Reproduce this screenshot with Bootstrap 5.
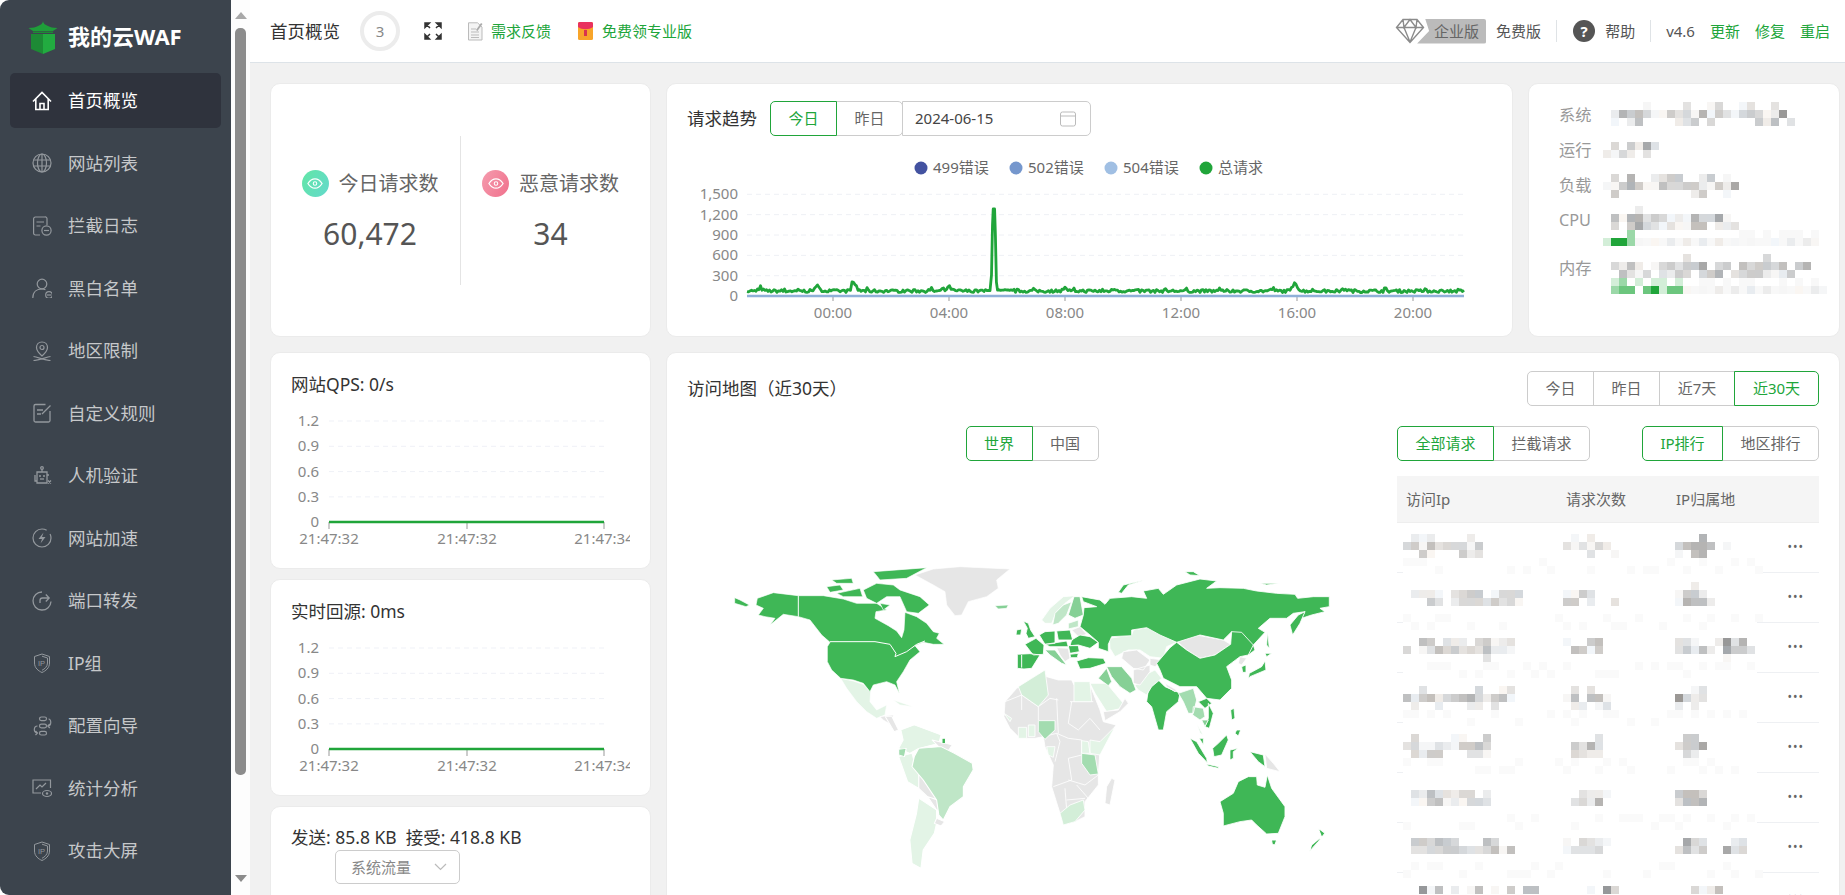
<!DOCTYPE html>
<html lang="zh-CN">
<head>
<meta charset="UTF-8">
<meta name="viewport" content="width=device-width, initial-scale=1.0">
<title>我的云WAF</title>
<link rel="stylesheet" href="https://cdn.jsdelivr.net/npm/bootstrap@5.3.0/dist/css/bootstrap.min.css">
<style>
html, body { height: 100%; overflow: hidden; }
body { font-family: "Noto Sans", "Noto Sans CJK SC", sans-serif; font-size: 17.5px; color: #333; background: #fff; }
.shell { height: 895px; overflow: hidden; }

/* sidebar */
.side { width: 231px; flex: none; background: #3c444d; border-radius: 9px 0 0 9px; }
.brand { height: 73px; padding-left: 28px; gap: 10px; color: #fff; font-size: 22px; font-weight: 700; }
.side .nav { padding: 0 10px; }
.side .nav-link { height: 55px; margin-bottom: 7.5px; padding: 0 0 0 22px; gap: 16px; color: #c6c8ca; font-size: 17.5px; border-radius: 5px; }
.side .nav-link.active { background: #2f333d; color: #fff; }
.side .nav-link svg { width: 20px; height: 20px; flex: none; color: #93989d; }
.side .nav-link.active svg { color: #fff; }
.side-scroll { width: 19px; flex: none; background: #fdfdfd; }
.side-scroll .thumb { width: 11px; height: 747px; margin: 9px auto 0; background: #8c8c8c; border-radius: 5px; }
.tri-up, .tri-down { width: 0; height: 0; margin: 0 auto; border-left: 6.5px solid transparent; border-right: 6.5px solid transparent; }
.tri-up { margin-top: 12px; border-bottom: 7px solid #a8a8a8; }
.tri-down { margin-top: 100px; border-top: 7px solid #8c8c8c; }

/* top bar */
.main { min-width: 0; background: #f1f1f1; }
.topbar { height: 63px; flex: none; background: #fff; border-bottom: 1px solid #dde3e8; padding: 0 15px 0 20px; }
.count-ring { width: 40px; height: 40px; margin-left: 20px; border: 4px solid #ececec; border-radius: 50%; color: #888; font-size: 15px; }
.top-link { color: #20a53a; font-size: 15px; text-decoration: none; }
.top-text { color: #555; font-size: 15px; }
.top-sep { width: 1px; height: 22px; background: #dfe3e6; }
.ent-tag { width: 69px; height: 25px; margin-left: -8px; padding-left: 17px; background: #bbb; color: #666; font-size: 15px; clip-path: polygon(8px 0, 100% 0, 100% 100%, 0 100%, 12px 50%); border-radius: 0 2px 2px 0; }
.help-dot { width: 22px; height: 22px; border-radius: 50%; background: #555; color: #fff; font-size: 15px; font-weight: 700; }

/* content */
.content { padding: 20px 5px 0 20px; gap: 15px; }
.top-grid { display: grid; grid-template-columns: 381px 847px 312px; gap: 15px; height: 254px; flex: none; }
.low-grid { display: grid; grid-template-columns: 381px 1174px; gap: 15px; }
.left-stack { gap: 10px; }
.dash-card { border: 1px solid #ebebeb; border-radius: 10px; background: #fff; }
.stat-col { width: 189px; padding-left: 9px; }
.stat-col2 { padding-right: 10px; }
.stat-split { width: 1px; height: 149px; background: #e4e4e4; flex: none; }
.stat-head { gap: 10px; }
.stat-dot { width: 27px; height: 27px; border-radius: 50%; flex: none; }
.stat-dot.ok { background: linear-gradient(120deg, #62e6a6, #63d9cc); }
.stat-dot.bad { background: linear-gradient(120deg, #f59cae, #f0708c); }
.stat-label { color: #666; font-size: 20px; }
.stat-num { color: #555; font-size: 30px; line-height: 1.2; margin-top: 17px; }

.seg { height: 35px; }
.seg .btn { height: 35px; padding: 0; font-size: 15px; color: #666; background: #fff; border: 1px solid #ccc; border-radius: 5px; line-height: 33px; }
.seg .btn.on { color: #20a53a; border-color: #20a53a; z-index: 2; }
.w67 { width: 67px; } .w76 { width: 76px; } .w85 { width: 85px; } .w97 { width: 97px; } .w81 { width: 81px; }
.date-box { width: 189px; margin-left: -1px; height: 35px; border: 1px solid #ccc; border-radius: 0 5px 5px 0; color: #444; font-size: 15px; padding: 0 14px 0 12px; }
.trend-head { height: 57px; padding: 12px 0 0 20px; gap: 13px; }
.draw { display: block; }
.draw text { font-size: 15px; fill: #888; }

.sys-label { position: absolute; left: 30px; color: #999; font-size: 16.25px; line-height: 24px; }
.lb1 { top: 19px; } .lb2 { top: 54px; } .lb3 { top: 89px; } .lb4 { top: 124px; } .lb5 { top: 172px; }
.pixels { position: absolute; left: 0; top: 0; pointer-events: none; }

.mini-card { padding: 19px 20px 0; height: 217px; }
.mini-title { line-height: 24px; color: #333; }
.traffic { height: 260px; padding: 18px 20px 0; }
.traffic-sel { width: 125px; height: 34px; margin: 1px 0 0 44px; padding: 0 12px 0 15px; border: 1px solid #ccc; border-radius: 5px; color: #888; font-size: 15px; }

.map-card { height: 560px; padding: 18px 20px 0; }
.map-title { line-height: 35px; color: #333; }
.map-body { gap: 20px; margin-top: 20px; }
.map-left { width: 690px; flex: none; }
.map-svg { display: block; margin: 79px 0 0 13px; }
.map-right { width: 422px; flex: none; }
.tbl-wrap { margin-top: 15px; }
.ip-table { width: 422px; margin: 0; font-size: 15px; table-layout: fixed; }
.ip-table th { height: 46px; padding: 0 0 0 9px; background: #f5f5f5; color: #666; font-weight: 400; border-bottom: 1px solid #eee; vertical-align: middle; }
.ip-table td { height: 50px; padding: 0; border-bottom: 1px solid #eef0f3; vertical-align: middle; }
.dots { display: block; padding-right: 15px; text-align: right; color: #666; font-size: 12px; letter-spacing: 1px; line-height: 1; }
</style>
</head>
<body>

<svg width="0" height="0" class="position-absolute" aria-hidden="true">
  <symbol id="i-home" viewBox="0 0 20 20"><path d="M1 10.5 10 1.5l9 9M3.8 8v10.5h12.4V8M8 18.5v-6h4v6" fill="none" stroke="currentColor" stroke-width="1.6"/></symbol>
  <symbol id="i-globe" viewBox="0 0 20 20"><g fill="none" stroke="currentColor" stroke-width="1.2"><circle cx="10" cy="10" r="9"/><ellipse cx="10" cy="10" rx="4.5" ry="9"/><path d="M10 1v18M1.5 7h17M1.5 13h17"/></g></symbol>
  <symbol id="i-log" viewBox="0 0 20 20"><g fill="none" stroke="currentColor" stroke-width="1.2"><path d="M8 19H3.5A1.8 1.8 0 0 1 1.6 17V3A1.8 1.8 0 0 1 3.5 1h9.2A1.8 1.8 0 0 1 15 3v6"/><path d="M4.5 6h7.5M4.5 10h4"/><circle cx="14.5" cy="14.5" r="4.6"/><path d="M12 14.5h5"/></g></symbol>
  <symbol id="i-user" viewBox="0 0 20 20"><g fill="none" stroke="currentColor" stroke-width="1.2"><circle cx="10" cy="6" r="4.8"/><path d="M.8 20c0-6 4-9 9.2-9 1.500 0 2.500.3 3.500.7"/><circle cx="17" cy="17" r="3.300"/><path d="M15 17h4"/></g></symbol>
  <symbol id="i-pin" viewBox="0 0 20 20"><g fill="none" stroke="currentColor" stroke-width="1.2"><path d="M10 1C6.500 1 4.500 3.500 4.500 6.500 4.500 10 10 15 10 15s5.500-5 5.500-8.500C15.500 3.500 13.500 1 10 1Z"/><circle cx="10" cy="6.500" r="2"/><path d="M1.500 15.500c5 1 12 4 17 4M18.500 15.500c-5 1-12 4-17 4"/></g></symbol>
  <symbol id="i-rule" viewBox="0 0 20 20"><g fill="none" stroke="currentColor" stroke-width="1.300"><path d="M13.500 1.500h-10A1.500 1.500 0 0 0 2 3v14.500A1.500 1.500 0 0 0 3.500 19h13a1.500 1.500 0 0 0 1.500-1.500V8"/><path d="M5 7h6M5 11h4M10 11l8.500-8.500"/></g></symbol>
  <symbol id="i-bot" viewBox="0 0 20 20"><g fill="none" stroke="currentColor" stroke-width="1.300"><circle cx="10" cy="2" r="1.300"/><path d="M10 3.300V6M5 6h10v11H5zM3 9v6M3 9v6h2M15 9h2"/><path d="M8 13h4"/></g><circle cx="8" cy="10" r="1" fill="currentColor"/><circle cx="12" cy="10" r="1" fill="currentColor"/><path d="m16 14.500 3 3m0-3-3 3" stroke="currentColor" stroke-width="1.300"/></symbol>
  <symbol id="i-bolt" viewBox="0 0 20 20"><circle cx="10" cy="10" r="9" fill="none" stroke="currentColor" stroke-width="1.200" stroke-dasharray="47 5"/><path d="M11.500 4.500 6.500 11H10l-1.500 4.500 5-6.500H10Z" fill="currentColor"/></symbol>
  <symbol id="i-fwd" viewBox="0 0 20 20"><g fill="none" stroke="currentColor" stroke-width="1.300"><path d="M10 1a9 9 0 1 0 9 9.500"/><path d="M8 12V9.500A2.500 2.500 0 0 1 10.500 7H17M13.800 3.500 17.200 7l-3.400 3.500"/></g></symbol>
  <symbol id="i-ip" viewBox="0 0 20 20"><g fill="none" stroke="currentColor" stroke-width="1"><path d="M10 1l7.500 2.500V10c0 5-4 8-7.500 9.500C6.500 18 2.500 15 2.500 10V3.500Z"/><path d="M10 3.200l5.500 1.800V10c0 3.700-3 6-5.500 7.300"/></g><text x="6" y="12.500" font-size="7.500" fill="currentColor" font-family="Liberation Sans, sans-serif">IP</text></symbol>
  <symbol id="i-flow" viewBox="0 0 20 20"><g fill="none" stroke="currentColor" stroke-width="1.200"><rect x="7.500" y="1" width="7" height="3.600" rx="1.800"/><rect x="7.500" y="8.200" width="7" height="3.600" rx="1.800"/><rect x="7.500" y="15.400" width="7" height="3.600" rx="1.800"/><path d="M16.500 3c3 0 3.200 6.800-.5 7M17.800 8l-2 2 2 2M5.500 10C1.500 10 1 17 5.500 17M3.500 15l2 2-2 2"/></g></symbol>
  <symbol id="i-stat" viewBox="0 0 20 20"><g fill="none" stroke="currentColor" stroke-width="1.200"><path d="M9 15H1V2h17.500v8"/><path d="m4 11 4-4 2 2 4-4"/><ellipse cx="15" cy="15.500" rx="4.500" ry="3"/></g><circle cx="15" cy="15.500" r="1.200" fill="currentColor"/></symbol>
  <symbol id="i-eye" viewBox="0 0 20 14"><path d="M1 7c2.500-4 5.500-6 9-6s6.500 2 9 6c-2.500 4-5.500 6-9 6S3.500 11 1 7Z" fill="none" stroke="#fff" stroke-width="1.600"/><circle cx="10" cy="7" r="2.200" fill="none" stroke="#fff" stroke-width="1.400"/></symbol>
</svg>

<div class="shell d-flex">
  <aside class="side">
    <div class="brand d-flex align-items-center">
      <svg width="30" height="34" viewBox="0 0 30 34">
        <path d="M15 1c0 2-2 4-5 5h10c-3-1-5-3-5-5Z" fill="#1f9e3a"/>
        <path d="M.5 8C5 8 8 7 10 6h10c2 1 5 2 9.500 2L25 11H5Z" fill="#1f9e3a"/>
        <path d="M5 11.500h20V13H5Z" fill="#1d8a35"/>
        <path d="M3 14h12v20L3 29Z" fill="#1d8a35"/>
        <path d="M15 14h12v15l-12 5Z" fill="#22ab40"/>
      </svg>
      <span>我的云WAF</span>
    </div>
    <nav class="nav flex-column">
      <a class="nav-link active d-flex align-items-center" href="#"><svg><use href="#i-home"/></svg>首页概览</a>
      <a class="nav-link d-flex align-items-center" href="#"><svg><use href="#i-globe"/></svg>网站列表</a>
      <a class="nav-link d-flex align-items-center" href="#"><svg><use href="#i-log"/></svg>拦截日志</a>
      <a class="nav-link d-flex align-items-center" href="#"><svg><use href="#i-user"/></svg>黑白名单</a>
      <a class="nav-link d-flex align-items-center" href="#"><svg><use href="#i-pin"/></svg>地区限制</a>
      <a class="nav-link d-flex align-items-center" href="#"><svg><use href="#i-rule"/></svg>自定义规则</a>
      <a class="nav-link d-flex align-items-center" href="#"><svg><use href="#i-bot"/></svg>人机验证</a>
      <a class="nav-link d-flex align-items-center" href="#"><svg><use href="#i-bolt"/></svg>网站加速</a>
      <a class="nav-link d-flex align-items-center" href="#"><svg><use href="#i-fwd"/></svg>端口转发</a>
      <a class="nav-link d-flex align-items-center" href="#"><svg><use href="#i-ip"/></svg>IP组</a>
      <a class="nav-link d-flex align-items-center" href="#"><svg><use href="#i-flow"/></svg>配置向导</a>
      <a class="nav-link d-flex align-items-center" href="#"><svg><use href="#i-stat"/></svg>统计分析</a>
      <a class="nav-link d-flex align-items-center" href="#"><svg><use href="#i-ip"/></svg>攻击大屏</a>
    </nav>
  </aside>
  <div class="side-scroll">
    <div class="tri-up"></div>
    <div class="thumb"></div>
    <div class="tri-down"></div>
  </div>

  <div class="main flex-grow-1 d-flex flex-column">
    <header class="topbar d-flex align-items-center">
      <span>首页概览</span>
      <span class="count-ring d-flex align-items-center justify-content-center">3</span>
      <svg class="ms-4" width="18" height="18" viewBox="0 0 18 18"><path d="M1 1l5 5M1 1h4.500L1 5.500ZM17 1l-5 5M17 1h-4.500L17 5.500ZM1 17l5-5M1 17h4.500L1 12.500ZM17 17l-5-5M17 17h-4.500l4.500-4.500Z" fill="#333" stroke="#333" stroke-width="1.500"/></svg>
      <svg style="margin-left:25px" width="16" height="19" viewBox="0 0 16 19"><path d="M1.500.8h9L15 5v13H1.500Z" fill="#f4f4f4" stroke="#bbb"/><path d="M4 7h5M4 10h8M4 13h8M4 15.500h8" stroke="#bbb"/><path d="M9 8l5-7 1.500 1-5 7Z" fill="#aaa"/></svg>
      <a class="top-link ms-2" href="#">需求反馈</a>
      <svg style="margin-left:27px" width="15" height="18" viewBox="0 0 15 18"><rect width="15" height="18" rx="1.500" fill="#f8a52a"/><path d="M0 1.500A1.500 1.500 0 0 1 1.500 0h12A1.500 1.500 0 0 1 15 1.500V5c-4 3-11 3-15 0Z" fill="#e9325f"/><rect x="6" y="8" width="3" height="6" fill="#d8344f"/></svg>
      <a class="top-link" style="margin-left:9px" href="#">免费领专业版</a>

      <div class="ms-auto d-flex align-items-center">
        <svg width="30" height="26" viewBox="0 0 30 26" class="position-relative z-1"><path d="M8 1.500h14l6.500 8L15 24.500 1.500 9.500ZM1.500 9.500h27M9 9.500 15 24l6-14.500M8 1.500l1 8 6-8 6 8 1-8" fill="#fff" stroke="#8b8b8b" stroke-width="1.400"/></svg>
        <span class="ent-tag d-flex align-items-center">企业版</span>
        <span class="top-text" style="margin-left:10px">免费版</span>
        <span class="top-sep" style="margin:0 16px 0 15px"></span>
        <span class="help-dot d-flex align-items-center justify-content-center">?</span>
        <span class="top-text" style="margin-left:10px">帮助</span>
        <span class="top-sep" style="margin:0 15px"></span>
        <span class="top-text">v4.6</span>
        <a class="top-link" style="margin-left:15px" href="#">更新</a>
        <a class="top-link" style="margin-left:15px" href="#">修复</a>
        <a class="top-link" style="margin-left:15px" href="#">重启</a>
      </div>
    </header>

    <div class="content d-flex flex-column">
      <div class="top-grid">
        <section class="dash-card d-flex align-items-center">
          <div class="stat-col d-flex flex-column align-items-center">
            <div class="stat-head d-flex align-items-center"><span class="stat-dot ok d-flex align-items-center justify-content-center"><svg width="16" height="11"><use href="#i-eye"/></svg></span><span class="stat-label">今日请求数</span></div>
            <div class="stat-num">60,472</div>
          </div>
          <div class="stat-split"></div>
          <div class="stat-col2 flex-grow-1 d-flex flex-column align-items-center">
            <div class="stat-head d-flex align-items-center"><span class="stat-dot bad d-flex align-items-center justify-content-center"><svg width="16" height="11"><use href="#i-eye"/></svg></span><span class="stat-label">恶意请求数</span></div>
            <div class="stat-num">34</div>
          </div>
        </section>

        <section class="dash-card">
          <div class="trend-head d-flex align-items-center">
            <span>请求趋势</span>
            <div class="d-flex">
              <div class="btn-group seg" role="group">
                <button type="button" class="btn on w67">今日</button>
                <button type="button" class="btn w67">昨日</button>
              </div>
              <div class="date-box d-flex align-items-center justify-content-between">
                <span>2024-06-15</span>
                <svg width="16" height="16" viewBox="0 0 16 16"><rect x=".5" y="1" width="15" height="14" rx="2" fill="none" stroke="#bbb"/><path d="M.5 5h15" stroke="#bbb"/></svg>
              </div>
            </div>
          </div>
          <svg id="trend" class="draw" width="845" height="195" viewBox="667 141 845 195"></svg>
        </section>

        <section class="dash-card position-relative">
          <span class="sys-label lb1">系统</span>
          <span class="sys-label lb2">运行</span>
          <span class="sys-label lb3">负载</span>
          <span class="sys-label lb4">CPU</span>
          <span class="sys-label lb5">内存</span>
          <svg id="sysPixels" class="pixels" width="310" height="252" viewBox="1529 84 310 252" shape-rendering="crispEdges"></svg>
        </section>
      </div>

      <div class="low-grid">
        <div class="left-stack d-flex flex-column">
          <section class="dash-card mini-card">
            <div class="mini-title">网站QPS: 0/s</div>
            <svg class="draw mini-chart" width="339" height="170" viewBox="0 0 339 170"></svg>
          </section>
          <section class="dash-card mini-card">
            <div class="mini-title">实时回源: 0ms</div>
            <svg class="draw mini-chart" width="339" height="170" viewBox="0 0 339 170"></svg>
          </section>
          <section class="dash-card traffic">
            <div class="mini-title">发送: 85.8 KB&nbsp; 接受: 418.8 KB</div>
            <div class="traffic-sel d-flex align-items-center justify-content-between">
              <span>系统流量</span>
              <svg width="13" height="8" viewBox="0 0 13 8"><path d="M1 1l5.500 5.500L12 1" fill="none" stroke="#bbb" stroke-width="1.200"/></svg>
            </div>
          </section>
        </div>

        <section class="dash-card map-card">
          <div class="d-flex justify-content-between">
            <span class="map-title">访问地图（近30天）</span>
            <div class="btn-group seg" role="group">
              <button type="button" class="btn w67">今日</button>
              <button type="button" class="btn w67">昨日</button>
              <button type="button" class="btn w76">近7天</button>
              <button type="button" class="btn on w85">近30天</button>
            </div>
          </div>
          <div class="map-body d-flex">
            <div class="map-left">
              <div class="d-flex justify-content-center">
                <div class="btn-group seg" role="group">
                  <button type="button" class="btn on w67">世界</button>
                  <button type="button" class="btn w67">中国</button>
                </div>
              </div>
              <svg class="map-svg" width="700" height="355" viewBox="700 540 700 355">
                <g stroke="#fff" stroke-linejoin="round">
                  <!-- north america and greenland -->
                  <g transform="translate(720 555) scale(.3333)" stroke-width="2">
                    <path fill="#e6e6e6" d="M585 60 640 42 720 35 870 42 830 75 835 100 800 125 745 140 725 180 705 182 680 150 675 110 640 90Z"/>
                    <path fill="#86d096" d="M825 152 865 150 860 160 835 162Z"/>
                    <path fill="#e3f4e6" d="M362 370 400 378 430 388 452 412 450 440 470 465 500 450 495 480 470 490 440 470 410 440 380 400Z"/>
                    <path fill="#e3f4e6" d="M520 435 580 455 540 450Z"/>
                    <path fill="#e6e6e6" d="M480 485 520 480 515 510 490 495Z"/>
                    <g fill="#3fb756">
                      <path d="M112 130 160 113 235 122 310 122 370 132 410 145 470 145 500 165 468 170 465 190 505 212 530 228 545 248 552 225 555 172 590 185 620 205 640 230 658 235 650 250 672 268 640 268 610 262 585 272 600 290 570 315 550 350 530 380 538 415 525 390 500 380 460 390 450 410 430 385 400 375 362 370 335 345 322 320 322 275 330 262 305 240 270 195 235 185 190 178 150 210 165 190 135 185 115 180 130 160 108 150Z"/>
                      <path d="M44 128 60 135 88 150 78 155 44 145ZM320 95 360 90 370 105 330 112ZM350 115 420 100 428 125 370 125ZM335 75 395 70 400 85 350 85ZM460 50 620 38 560 70 480 75 470 62ZM430 105 470 85 520 90 540 105 600 125 628 150 595 175 560 170 540 125 500 125 470 145 440 130ZM480 145 510 150 490 165Z"/>
                    </g>
                    <path fill="none" stroke-width="3" d="M330 260H465L510 268 528 295 525 305 560 290 590 268 615 258M235 122V185"/>
                  </g>

                  <!-- africa -->
                  <g transform="translate(1000 670) scale(.3333)" stroke-width="2.500">
                    <path fill="#e6e6e6" d="M50 55 90 30 135 0 140 20 175 30 215 30 222 45 270 45 300 120 310 155 348 165 335 190 300 240 295 315 295 345 255 395 255 440 225 455 190 465 180 430 155 350 160 285 135 230 130 200 105 205 60 205 30 175 12 140 15 95Z"/>
                    <path fill="none" d="M15 95 65 75 115 110 150 85 175 90M65 75V120M115 110V150M170 85 175 190M215 95 205 160 235 180 270 145 300 180M210 95H280M130 200 170 190 205 205 245 210M170 190 180 215 165 275M245 210V255L205 265 215 330 160 350M205 330 255 345 295 315M195 355 200 420M200 390 255 385M230 345 265 385"/>
                    <path fill="#d3eed8" d="M55 50 95 25 135 0 145 75 115 110 65 75Z"/>
                    <path fill="#e3f4e6" d="M222 35H270L275 95H222ZM245 212 265 215 270 250 245 250ZM270 210 300 215 345 170 300 255 270 250ZM55 172H80V205H55ZM85 165H105V200H85ZM12 130 35 145 30 155ZM140 230H165L160 262 145 255ZM270 40H320L370 100 365 115 320 125 285 70Z"/>
                    <path fill="#d3eed8" d="M180 430 210 405 250 390 255 420 225 455 190 465Z"/>
                    <path fill="#a3dcb0" d="M115 152H165V180L135 208 115 185ZM245 250 285 255 295 312 270 315 245 280Z"/>
                    <path fill="#e6e6e6" d="M310 125 355 120 375 85 385 100 360 125 315 152ZM335 325 345 330 330 405 315 400 320 350Z"/>
                    <path fill="#e6e6e6" d="M795 252 820 280 840 305 800 295Z"/>
                    <g fill="#3fb756">
                      <path d="M445 60 470 25 495 50 530 65 540 70 535 95 500 125 490 180 475 180 455 110 440 95Z"/>
                      <path d="M570 205 590 215 620 265 622 278 595 250ZM598 205H610V225ZM638 235 655 220 680 195 685 210 665 255 642 260ZM690 240 715 235 700 245V265L690 270ZM620 282 655 290V295L625 288ZM692 120 702 115 705 145 695 150ZM710 180H722L715 198 705 190ZM750 245 790 255 795 290 775 275Z"/>
                      <path d="M595 95 620 85 635 100 615 115 605 105ZM625 100 640 130 628 175 615 170 625 145Z"/>
                      <path d="M660 395 700 370 715 335 745 320 770 320 772 345 795 352 802 315 815 355 855 410V440L835 490 800 492 770 465 755 450 720 455 670 468V430Z"/>
                    </g>
                    <path fill="#a3dcb0" d="M535 70 580 55 590 90 580 130 565 130 550 95ZM580 110 610 115 615 140 600 150 578 135Z"/>
                    <path fill="#86d096" d="M605 150H625L615 170Z"/>
                    <path fill="#e3f4e6" d="M590 160 610 195 600 190Z"/>
                  </g>

                  <!-- europe and asia -->
                  <g transform="translate(1000 555) scale(.3333)" stroke-width="2.500">
                    <path fill="#e3f4e6" d="M328 250 395 240 400 225 440 218 480 235 530 262 500 275 490 310 450 305 420 285 385 285 345 305 330 280ZM405 392 445 355 465 345 485 370 455 395 440 420 415 405ZM125 195 150 160 190 125 225 122 195 145 170 170 155 205 135 205Z"/>
                    <path fill="#bfe6c7" d="M158 210 165 175 190 150 215 140 200 180 175 205ZM205 205 235 195V215L205 222Z"/>
                    <path fill="#86d096" d="M205 180 222 125H240L250 180 225 190ZM320 335H365L395 370 408 405 390 415 360 395 335 365ZM295 370 320 340 335 380 325 392ZM135 285H165L200 330 185 325 150 300Z"/>
                    <path fill="#e6e6e6" d="M215 225 240 215 260 238 235 245ZM170 278 205 280 210 310 195 320 180 300ZM370 290 410 285 450 315 430 345 400 340 365 310ZM400 345 450 330V350L420 390 400 385ZM450 310 490 315 465 335 450 330ZM530 258 590 240 670 255 692 268 645 300 600 310 560 285ZM720 305 740 310 725 330 715 325ZM495 385 530 405 525 410 500 395Z"/>
                    <g fill="#3fb756">
                      <path d="M70 198 85 205 92 225 105 245 85 250 78 235 82 220ZM50 225 65 222 62 240 48 240Z"/>
                      <path d="M75 268 108 250 132 270 130 298 100 300 92 290ZM52 298 90 296 120 300 95 340 72 342 52 340ZM118 240 135 230 165 228V265L135 268ZM170 228 210 225 218 255 175 255ZM135 268 200 258 205 275 150 275ZM215 255 240 240 270 245 295 262 270 280 235 270 210 272ZM205 272H235L238 290 210 295ZM210 298 235 295 232 308 212 308ZM230 318 265 308 310 310 318 325 270 340 240 342Z"/>
                      <path d="M245 125 300 135 315 148 330 130 395 125 440 130 430 108 475 100 490 118 530 90 600 72 650 78 620 100 660 98 730 100 770 108 830 115 885 118 893 130 940 125H988V155L960 160 975 170 935 180 905 190 915 170 880 175 860 190H810L775 220 795 232 760 270 765 285 745 300 740 280 695 230 670 255 600 240 530 262 480 240 440 218 395 225V242L335 245 325 268V290L295 280V262L270 240 240 215 250 180 252 158 290 155 250 140Z"/>
                      <path d="M355 112 370 90 435 75 385 90 365 115ZM555 50H580L600 62 570 60ZM780 85H840L800 90ZM870 210 895 180 915 170 900 205 878 240ZM803 230 808 280 800 270ZM795 295H815L800 305ZM795 318 798 345 750 365 745 372 748 355 785 335ZM725 335 738 330V352H728Z"/>
                      <path d="M470 325 510 278 530 262 560 285 600 310 645 300 692 268 695 230 725 232 760 270 745 300 720 305 680 335 695 375V400L660 435 620 430 590 395 540 395 490 370 480 345Z"/>
                    </g>
                    <path fill="none" stroke-width="3" d="M65 300V338"/>
                  </g>

                  <!-- south america, new zealand -->
                  <g transform="translate(700 540) scale(.4464 .3333)" stroke-width="2.500">
                    <path fill="#e3f4e6" d="M450 570 480 555 540 585 535 610 490 625 470 640 445 625 455 600ZM445 650 475 640 485 690 495 720 490 745 465 725ZM490 775 530 810 530 850 525 880 500 930 495 985 475 970 470 900 485 820Z"/>
                    <path fill="#e6e6e6" d="M520 600 565 615 555 635 535 620ZM490 695 520 740 530 780 510 770 490 745ZM510 770 535 780 545 810 530 810ZM530 835 548 845 540 858 525 850ZM415 530 430 530 445 570 435 575Z"/>
                    <path fill="#bfe6c7" d="M490 625 540 620 570 640 610 670 612 690 590 740 590 770 560 800 545 840 535 825 530 780 500 720 475 680 480 650Z"/>
                    <path fill="#a3dcb0" d="M445 628 462 625 458 650 445 645Z"/>
                    <path fill="#3fb756" d="M542 595H550V610H542ZM1280 900H1292L1288 915 1282 913ZM1385 865 1400 880 1385 905 1365 935 1370 915 1392 890Z"/>
                  </g>
                </g>
              </svg>
            </div>
            <div class="map-right">
              <div class="d-flex justify-content-between">
                <div class="btn-group seg" role="group">
                  <button type="button" class="btn on w97">全部请求</button>
                  <button type="button" class="btn w97">拦截请求</button>
                </div>
                <div class="btn-group seg" role="group">
                  <button type="button" class="btn on w81">IP排行</button>
                  <button type="button" class="btn w97">地区排行</button>
                </div>
              </div>
              <div class="tbl-wrap position-relative">
                <table class="table ip-table">
                  <colgroup><col style="width:160px"><col style="width:110px"><col><col style="width:50px"></colgroup>
                  <thead><tr><th>访问Ip</th><th>请求次数</th><th>IP归属地</th><th></th></tr></thead>
                  <tbody id="ipRows"></tbody>
                </table>
                <svg id="tblPixels" class="pixels" width="422" height="419" viewBox="1397 476 422 419" shape-rendering="crispEdges"></svg>
              </div>
            </div>
          </div>
        </section>
      </div>
    </div>
  </div>
</div>

<script src="https://cdn.jsdelivr.net/npm/bootstrap@5.3.0/dist/js/bootstrap.bundle.min.js"></script>
<script>
    const NS = "http://www.w3.org/2000/svg";
    let seed = 7;
    function rnd() {
        seed = (seed * 16807) % 2147483647;
        return seed / 2147483647;
    }
    function add(svg, tag, attrs, text) {
        let el = document.createElementNS(NS, tag);
        for (let k in attrs) el.setAttribute(k, attrs[k]);
        if (text) el.textContent = text;
        svg.appendChild(el);
        return el;
    }

    // trend chart, drawn in page coordinates
    let trend = document.getElementById("trend");
    ["1,500", "1,200", "900", "600", "300", "0"].forEach((label, i) => {
        let y = 194.3 + i * 20.35;
        add(trend, "text", {x: 738, y: y + 5, "text-anchor": "end"}, label);
        if (i < 5) add(trend, "line", {x1: 747, x2: 1464, y1: y, y2: y, stroke: "#eef0f5", "stroke-dasharray": "5 4"});
    });
    [["00:00", 833], ["04:00", 949], ["08:00", 1065], ["12:00", 1181], ["16:00", 1297], ["20:00", 1413]].forEach(t => {
        add(trend, "text", {x: t[1], y: 318, "text-anchor": "middle"}, t[0]);
        add(trend, "line", {x1: t[1], x2: t[1], y1: 296, y2: 301, stroke: "#999"});
    });
    [["499错误", 921, "#4352a0"], ["502错误", 1016, "#7597cd"], ["504错误", 1111, "#a0bfe3"], ["总请求", 1206, "#20a53a"]].forEach(l => {
        add(trend, "circle", {cx: l[1], cy: 168, r: 6.5, fill: l[2]});
        add(trend, "text", {x: l[1] + 12, y: 173, style: "fill:#666"}, l[0]);
    });
    let bumps = [[818, 5], [854, 8], [949, 4], [1295, 9], [1065, 3], [1115, 2], [1345, 2], [760, 3]];
    let pts = [];
    for (let x = 747; x <= 1464; x += 1.5) {
        let v = 1.5 + rnd() * 3;
        if (rnd() > .92) v += rnd() * 3;
        bumps.forEach(b => { v += b[1] * Math.exp(-Math.pow((x - b[0]) / 3, 2)); });
        if (x > 990.5 && x < 997) continue;
        pts.push(x.toFixed(1) + "," + (294 - v).toFixed(1));
        if (x > 989 && x <= 990.5) pts.push("991.5,275", "992.5,225", "993.2,209", "994.6,209", "995.4,235", "996.4,282");
    }
    add(trend, "line", {x1: 747, x2: 1464, y1: 296, y2: 296, stroke: "#8fb0d8", "stroke-width": 2.5});
    add(trend, "polyline", {points: pts.join(" "), fill: "none", stroke: "#20a53a", "stroke-width": 2.8, "stroke-linejoin": "round"});

    // the two small realtime charts
    document.querySelectorAll(".mini-chart").forEach(svg => {
        ["1.2", "0.9", "0.6", "0.3", "0"].forEach((label, i) => {
            let y = 25 + i * 25.3;
            add(svg, "text", {x: 28, y: y + 5, "text-anchor": "end"}, label);
            if (i < 4) add(svg, "line", {x1: 38, x2: 313, y1: y, y2: y, stroke: "#eff1f7", "stroke-dasharray": "5 4"});
        });
        [[38, 0], [176, 1], [313, 2]].forEach(t => {
            add(svg, "line", {x1: t[0], x2: t[0], y1: 126, y2: 133, stroke: "#999"});
            add(svg, "text", {x: t[0], y: 148, "text-anchor": "middle"}, t[1] == 2 ? "21:47:34" : "21:47:32");
        });
        add(svg, "line", {x1: 38, x2: 313, y1: 126, y2: 126, stroke: "#20a53a", "stroke-width": 2.4});
    });

    // blurred-out values: each character is one 8px mosaic block
    const GREENS = {g: "#20a53a", h: "#9bd8a8", i: "#d3eed8", j: "#6cc67e", a: "#f8f8f8"};
    const GRAYS = {1: 246, 2: 236, 3: 226, 4: 216, 5: 204, 6: 192, 7: 180, 8: 168, 9: 152};
    function mosaic(svg, x, y, row) {
        [...row].forEach((c, i) => {
            if (c == "." || c == " ") return;
            let fill = GREENS[c];
            if (!fill) {
                let g = GRAYS[c];
                let tint = Math.round((rnd() - .5) * 8);
                fill = "rgb(" + (g + tint) + "," + g + "," + (g - tint) + ")";
            }
            add(svg, "rect", {x: x + i * 8, y: y, width: 8, height: 8, fill: fill});
        });
    }

    let sys = document.getElementById("sysPixels");
    [
        [1611, 102, "....1....3..14..13..3.."],
        [1611, 110, "2756411534171531454129."],
        [1611, 118, "1.26....235.4.....526.3"],
        [1611, 142, "4.5283"],
        [1603, 150, "2142.3"],
        [1603, 174, ".4.7..2355..25.1"],
        [1603, 182, "11575116445521528"],
        [1603, 190, ".5.........25..1"],
        [1611, 206, "...2"],
        [1611, 214, "617735412174481"],
        [1611, 222, "4.5843131166.223"],
        [1603, 230, "...h.............aa.a.aaa.a"],
        [1603, 238, "iggh1a1a2a2a2a2a1a1aa1a2a21"],
        [1611, 254, ".........3.........4"],
        [1611, 262, "4262.1453558 45.645546 57"],
        [1611, 270, ".6314.3254.457.34552125"],
        [1603, 278, ".ih.i.ii.i..aa.a.aa...a.a.a"],
        [1603, 286, ".hjj.jgijj1a1a2a2a2a2a1a1a21"]
    ].forEach(r => mosaic(sys, r[0], r[1], r[2]));

    // table rows with the masked cells over them
    let body = document.getElementById("ipRows");
    for (let i = 0; i < 8; i++) {
        body.insertAdjacentHTML("beforeend", '<tr><td></td><td></td><td></td><td><span class="dots">•••</span></td></tr>');
    }
    let tbl = document.getElementById("tblPixels");
    [
        [534, ".212....2", ".1.2", "...7"],
        [542, "4516344415", "313142", "46776.1"],
        [550, "..51...523", "...3..1", "1.67"],
        [582, "", "", "..2"],
        [590, ".2221.3455.1444", "1153", "1552"],
        [598, "...53.244435341", "55.2..3", "17662"],
        [638, "..65.322.45123", "1..56", "331..2937"],
        [646, "4.136453436221", ".6515", "35262.8553"],
        [654, "..........3", "", "......1"],
        [686, "..3......4..13", ".3.3", "..13"],
        [694, "62562456742561", "16.661", "9423"],
        [702, ".2..2...22.3", ".22.13", "2.2"],
        [734, ".4....11..5", "....3", ".55"],
        [742, "34113215564", ".5373", "3558"],
        [750, ".4255...331", ".4322", ".42"],
        [790, ".32633244.2", "..3221", "5664"],
        [798, ".1156121443", ".3427", "3667"],
        [838, ".554654...64", "1.4321", ".843...23"],
        [846, ".3344554334616", "13334", "3635..834"],
        [886, "..916.2.16.1.5.66", "...1.94", "..4126"]
    ].forEach(r => {
        mosaic(tbl, 1403, r[0], r[1]);
        mosaic(tbl, 1563, r[0], r[2]);
        mosaic(tbl, 1675, r[0], r[3]);
    });
    [572, 622, 672, 722, 772, 822, 872].forEach(line => {
        add(tbl, "rect", {x: 1403, y: line - 2, width: 354, height: 4, fill: "#fff"});
        let top = 534 + 8 * Math.floor((line - 534) / 8);
        for (let x = 1403; x < 1757; x += 8) {
            if (rnd() > .55) add(tbl, "rect", {x: x, y: top - (rnd() > .5 ? 8 : 0), width: 8, height: 8, fill: "#fafafa"});
        }
    });
</script>
</body>
</html>
